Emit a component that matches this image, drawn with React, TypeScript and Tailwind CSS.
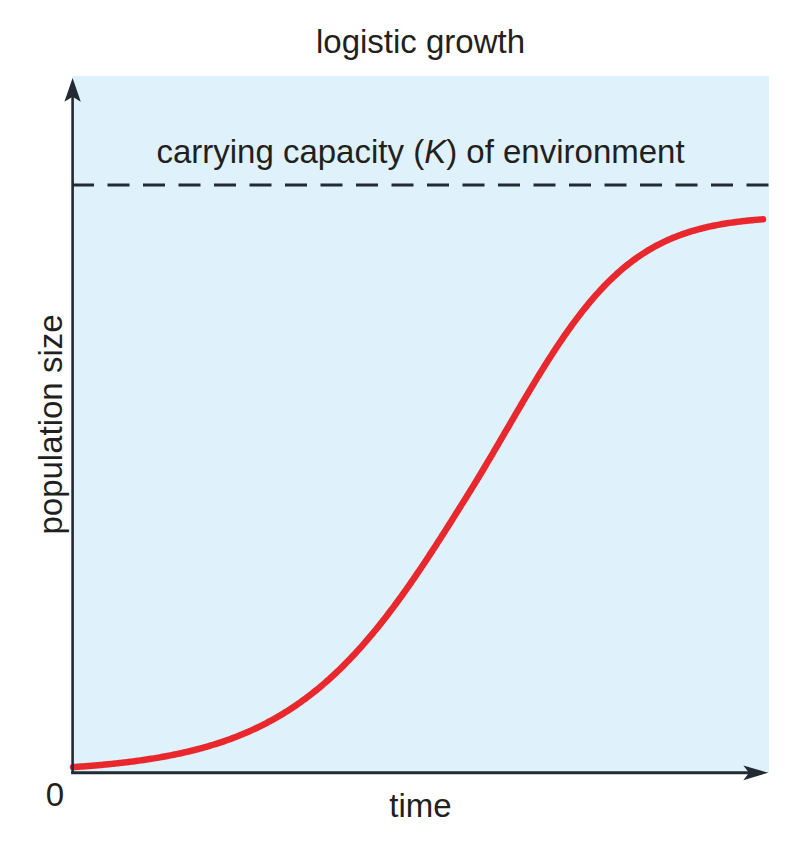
import React from "react";

// Smooth logistic-like curve fitted to the reference (page coordinates).
function curvePath(): string {
  const K = 557;
  const base = 773;
  const x0 = 468;
  const a = 0.0115;
  const c = 0.00002;
  let d = "";
  for (let x = 73; x <= 764; x += 1.5) {
    const dx = x - x0;
    const L = dx <= 0 ? a * dx : a * dx + c * dx * dx;
    const N = K / (1 + Math.exp(-L));
    const y = base - N;
    const px = (x - 72).toFixed(2);
    const py = (y - 76).toFixed(2);
    d += d === "" ? `M ${px} ${py}` : ` L ${px} ${py}`;
  }
  return d;
}

function ChartDrawing() {
  const ink = "#222a33";
  return (
    <svg
      className="absolute inset-0 overflow-visible"
      width={697}
      height={697}
      viewBox="0 0 697 697"
    >
      <line
        x1={0}
        y1={109}
        x2={697}
        y2={109}
        stroke={ink}
        strokeWidth={3}
        strokeDasharray="22 13.5"
      />
      <path
        d={curvePath()}
        fill="none"
        stroke="#e8282c"
        strokeWidth={6.5}
        strokeLinecap="round"
        strokeLinejoin="round"
      />
      <line x1={0.6} y1={698} x2={0.6} y2={18} stroke={ink} strokeWidth={2.6} />
      <polygon points="0.6,2 -7.6,25.7 0.6,20.7 8.8,25.7" fill={ink} />
      <line x1={-0.7} y1={696.7} x2={680} y2={696.7} stroke={ink} strokeWidth={3} />
      <polygon points="696.3,696.7 671.3,689.6 677,696.7 671.3,704.2" fill={ink} />
    </svg>
  );
}

export default function App() {
  return (
    <div className="w-[797px] h-[852px] bg-white text-[#231f20] font-['Liberation_Sans',Arial,sans-serif] text-[33px] leading-[33px]">
      <div className="h-[76px] pt-[25px] pl-[72px] w-[769px]">
        <div className="text-center">logistic growth</div>
      </div>
      <div className="grid grid-cols-[72px_697px] grid-rows-[697px_auto]">
        <div className="flex items-center justify-center pl-[29px]">
          <span className="-rotate-90 whitespace-nowrap">population size</span>
        </div>
        <div className="relative bg-[#dff1fb]">
          <ChartDrawing />
          <div className="relative pt-[59px] text-center whitespace-nowrap">
            carrying capacity (<i>K</i>) of environment
          </div>
        </div>
        <div className="pt-[5px] pr-[8px] text-right">0</div>
        <div className="pt-[16px] text-center">time</div>
      </div>
    </div>
  );
}
